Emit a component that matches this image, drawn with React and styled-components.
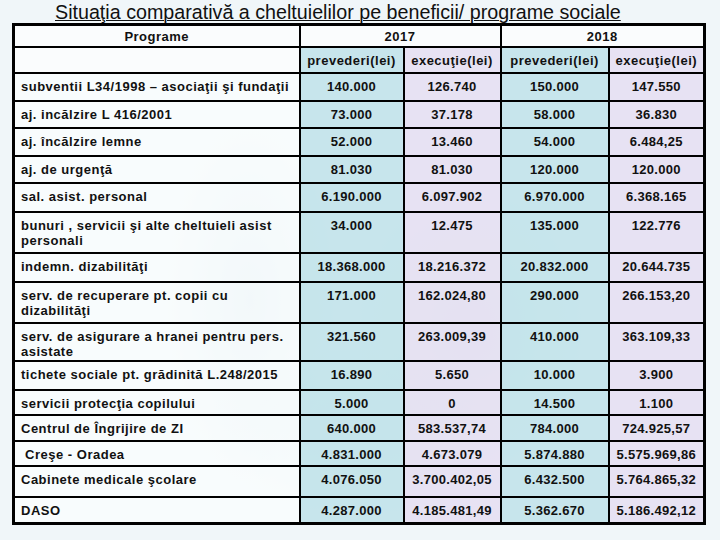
import React from "react";
import styled, { createGlobalStyle } from "styled-components";

const Global = createGlobalStyle`
  html, body {
    margin: 0;
    padding: 0;
  }
  body {
    width: 720px;
    height: 540px;
    overflow: hidden;
    background: #f0f6f9;
    font-family: "Liberation Sans", Arial, sans-serif;
  }
`;

const Slide = styled.div`
  position: relative;
  width: 720px;
  height: 540px;
  overflow: hidden;
  background:
    radial-gradient(ellipse 120px 260px at 250px 300px, rgba(170, 205, 220, 0.35), transparent 70%),
    radial-gradient(ellipse 160px 200px at 470px 330px, rgba(170, 205, 220, 0.3), transparent 70%),
    radial-gradient(ellipse 220px 120px at 360px 430px, rgba(190, 215, 228, 0.35), transparent 70%),
    #f0f6f9;
`;

const Title = styled.h1`
  margin: 0;
  padding: 2px 0 0 55px;
  height: 21px;
  font-family: "Liberation Sans", Arial, sans-serif;
  font-weight: normal;
  font-size: 19.7px;
  line-height: 20px;
  color: #111;
  text-decoration: underline;
  text-decoration-thickness: 1px;
  text-underline-offset: 1px;
  white-space: nowrap;
`;

const Table = styled.table`
  margin-left: 12px;
  border-collapse: collapse;
  table-layout: fixed;
  width: 691px;
  border: 3px solid #000;
  font-family: "Liberation Sans", Arial, sans-serif;
  font-size: 13px;
  font-weight: bold;
  color: #111;
`;

const tints = {
  label: "rgba(251, 253, 254, 0.75)",
  plan: "rgba(192, 226, 233, 0.88)",
  exec: "rgba(230, 224, 242, 0.9)",
  head: "rgba(251, 253, 254, 0.85)",
};

const Cell = styled.td`
  border: 2px solid #000;
  padding: ${(p) => (p.$label ? "5px 4px 0 6px" : "5px 2px 0 2px")};
  vertical-align: top;
  text-align: ${(p) => (p.$label ? "left" : "center")};
  line-height: 15px;
  letter-spacing: ${(p) => (p.$label ? "0.5px" : "0.3px")};
  background: ${(p) => tints[p.$tone || "label"]};
  overflow: hidden;
`;

const HeadCell = styled.th`
  border: 2px solid #000;
  padding: ${(p) => (p.$top ? "3px 2px 0" : "5px 2px 0")};
  vertical-align: top;
  text-align: center;
  font-weight: bold;
  line-height: 15px;
  letter-spacing: 0.5px;
  background: ${(p) => tints[p.$tone || "head"]};
`;

const Row = styled.tr`
  height: ${(p) => p.$h}px;
`;

const rows = [
  ["subventii L34/1998 – asociaţii şi fundaţii", "140.000", "126.740", "150.000", "147.550", 28],
  ["aj. incălzire L 416/2001", "73.000", "37.178", "58.000", "36.830", 27],
  ["aj. încălzire  lemne", "52.000", "13.460", "54.000", "6.484,25", 28],
  ["aj. de urgenţă", "81.030", "81.030", "120.000", "120.000", 27],
  ["sal. asist. personal", "6.190.000", "6.097.902", "6.970.000", "6.368.165", 29],
  ["bunuri , servicii şi alte cheltuieli asist personali", "34.000", "12.475", "135.000", "122.776", 41],
  ["indemn. dizabilităţi", "18.368.000", "18.216.372", "20.832.000", "20.644.735", 29],
  ["serv. de recuperare pt. copii cu dizabilităţi", "171.000", "162.024,80", "290.000", "266.153,20", 41],
  ["serv. de asigurare a hranei pentru pers. asistate", "321.560", "263.009,39", "410.000", "363.109,33", 38],
  ["tichete sociale pt. grădinită L.248/2015", "16.890", "5.650", "10.000", "3.900", 29],
  ["servicii protecţia copilului", "5.000", "0", "14.500", "1.100", 25],
  ["Centrul de Îngrijire de ZI", "640.000", "583.537,74", "784.000", "724.925,57", 26],
  ["\u00a0Creşe - Oradea", "4.831.000", "4.673.079", "5.874.880", "5.575.969,86", 25],
  ["Cabinete medicale şcolare", "4.076.050", "3.700.402,05", "6.432.500", "5.764.865,32", 31],
  ["DASO", "4.287.000", "4.185.481,49", "5.362.670", "5.186.492,12", 27],
];

const tones = ["plan", "exec", "plan", "exec"];

export default function App() {
  return (
    <>
      <Global />
      <Slide>
        <Title>Situaţia comparativă a cheltuielilor pe beneficii/ programe sociale</Title>
        <Table>
          <colgroup>
            <col style={{ width: 286 }} />
            <col style={{ width: 104 }} />
            <col style={{ width: 97 }} />
            <col style={{ width: 108 }} />
            <col style={{ width: 96 }} />
          </colgroup>
          <thead>
            <Row $h={22}>
              <HeadCell $top>Programe</HeadCell>
              <HeadCell $top colSpan={2}>2017</HeadCell>
              <HeadCell $top colSpan={2}>2018</HeadCell>
            </Row>
            <Row $h={26}>
              <HeadCell />
              <HeadCell $tone="plan">prevederi(lei)</HeadCell>
              <HeadCell $tone="exec">execuţie(lei)</HeadCell>
              <HeadCell $tone="plan">prevederi(lei)</HeadCell>
              <HeadCell $tone="exec">execuţie(lei)</HeadCell>
            </Row>
          </thead>
          <tbody>
            {rows.map(([label, a, b, c, d, h]) => (
              <Row key={label} $h={h}>
                <Cell $label>{label}</Cell>
                {[a, b, c, d].map((v, i) => (
                  <Cell key={i} $tone={tones[i]}>
                    {v}
                  </Cell>
                ))}
              </Row>
            ))}
          </tbody>
        </Table>
      </Slide>
    </>
  );
}
